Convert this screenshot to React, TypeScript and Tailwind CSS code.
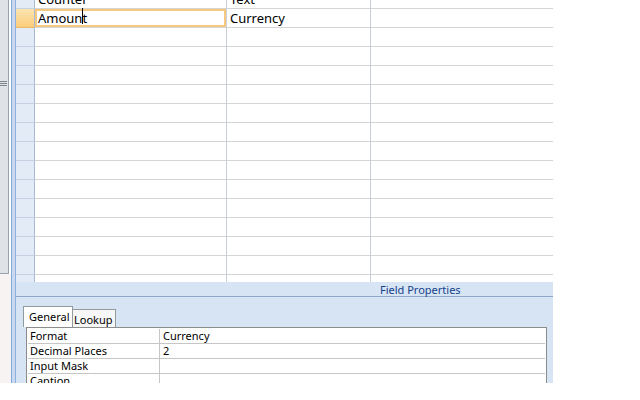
import React from "react";

const font = { fontFamily: '"Noto Sans", "Open Sans", Arial, sans-serif' };

interface FieldRow {
    name: string;
    type: string;
    selected?: boolean;
}

const rows: FieldRow[] = [
    { name: "Counter", type: "Text" },
    { name: "Amount", type: "Currency", selected: true },
    ...Array.from({ length: 14 }, () => ({ name: "", type: "" })),
];

const props = [
    { label: "Format", value: "Currency" },
    { label: "Decimal Places", value: "2" },
    { label: "Input Mask", value: "" },
    { label: "Caption", value: "" },
];

function GridRow({ row }: { row: FieldRow }) {
    return (
        <div className="flex h-[19px] shrink-0">
            <div
                className={
                    row.selected
                        ? "w-[19px] shrink-0 border-b border-r border-b-[#e7b86a] border-r-[#a9b9d1] bg-gradient-to-b from-[#fde4b0] to-[#fbcd7a]"
                        : "w-[19px] shrink-0 border-b border-r border-b-[#c6d2e3] border-r-[#a9b9d1] bg-[#e3ebf6]"
                }
            />
            <div
                className={
                    row.selected
                        ? "w-[192px] shrink-0 border-b border-r border-b-[#d4d4d4] border-r-[#c9cedb] pl-[3px] text-[13px] leading-[18px] text-black shadow-[inset_0_0_0_2px_#f7c880]"
                        : "w-[192px] shrink-0 border-b border-r border-b-[#d4d4d4] border-r-[#c9cedb] pl-[3px] text-[13px] leading-[18px] text-black"
                }
            >
                {row.selected ? (
                    <span>
                        Amoun
                        <span className="relative">
                            <span className="absolute left-0 top-[-1px] h-4 w-px bg-black" />t
                        </span>
                    </span>
                ) : (
                    row.name
                )}
            </div>
            <div className="w-[144px] shrink-0 border-b border-r border-b-[#d4d4d4] border-r-[#c9cedb] pl-[3px] text-[13px] leading-[18px] text-black">
                {row.type}
            </div>
            <div className="grow border-b border-b-[#d4d4d4]" />
        </div>
    );
}

export default function App() {
    return (
        <div className="h-[400px] w-[640px] overflow-hidden bg-white" style={font}>
            <div className="flex h-[383px] w-[553px]">
                {/* navigation pane edge */}
                <div className="flex w-[11px] shrink-0 flex-col">
                    <div className="flex h-[274px] w-[9px] flex-col border-b border-r border-[#98a2ae] bg-[#dfe3e8] pt-[81px]">
                        <div className="flex w-[7px] flex-col gap-px">
                            <div className="h-px bg-[#7d8591]" />
                            <div className="h-px bg-[#7d8591]" />
                            <div className="h-px bg-[#7d8591]" />
                        </div>
                    </div>
                    <div className="grow bg-[#f6f3f2]" />
                </div>
                <div className="w-[5px] shrink-0 border-l border-r border-l-[#82a9dd] border-r-[#8fb0df] bg-[#c9daf0]" />

                <div className="flex min-h-0 grow flex-col">
                    {/* design grid */}
                    <div className="h-[282px] shrink-0 overflow-hidden">
                        <div className="-mt-[10px] flex flex-col">
                            {rows.map((r, i) => (
                                <GridRow key={i} row={r} />
                            ))}
                        </div>
                    </div>

                    {/* field properties */}
                    <div className="flex min-h-0 grow flex-col overflow-hidden bg-[#d6e4f4]">
                        <div className="h-[15px] shrink-0 border-b border-[#8ea7c8] pl-[364px] text-[11px] leading-[15px] text-[#15428b]">
                            Field Properties
                        </div>
                        <div className="flex flex-col pl-[7px] pr-[6px] pt-[9px]">
                            <div className="flex items-end">
                                <div className="h-[21px] w-[50px] border border-b-0 border-[#919b9c] bg-white pl-[5px] text-[11px] leading-[20px] text-black">
                                    General
                                </div>
                                <div className="h-[18px] w-[43px] border border-b-0 border-l-0 border-[#919b9c] bg-[#f7f7f7] pl-px text-[11px] leading-[20px] text-black">
                                    Lookup
                                </div>
                            </div>
                            <div className="ml-[3px] border border-[#8c8c8c] bg-white p-px">
                                <div className="flex flex-col">
                                    {props.map((p) => (
                                        <div key={p.label} className="flex h-[15px] border-b border-[#c6c6c6]">
                                            <div className="w-[132px] shrink-0 border-r border-[#c6c6c6] pl-[2px] text-[11px] leading-[14px] text-black">
                                                {p.label}
                                            </div>
                                            <div className="grow pl-[3px] text-[11px] leading-[14px] text-black">
                                                {p.value}
                                            </div>
                                        </div>
                                    ))}
                                </div>
                            </div>
                        </div>
                    </div>
                </div>
            </div>
        </div>
    );
}
